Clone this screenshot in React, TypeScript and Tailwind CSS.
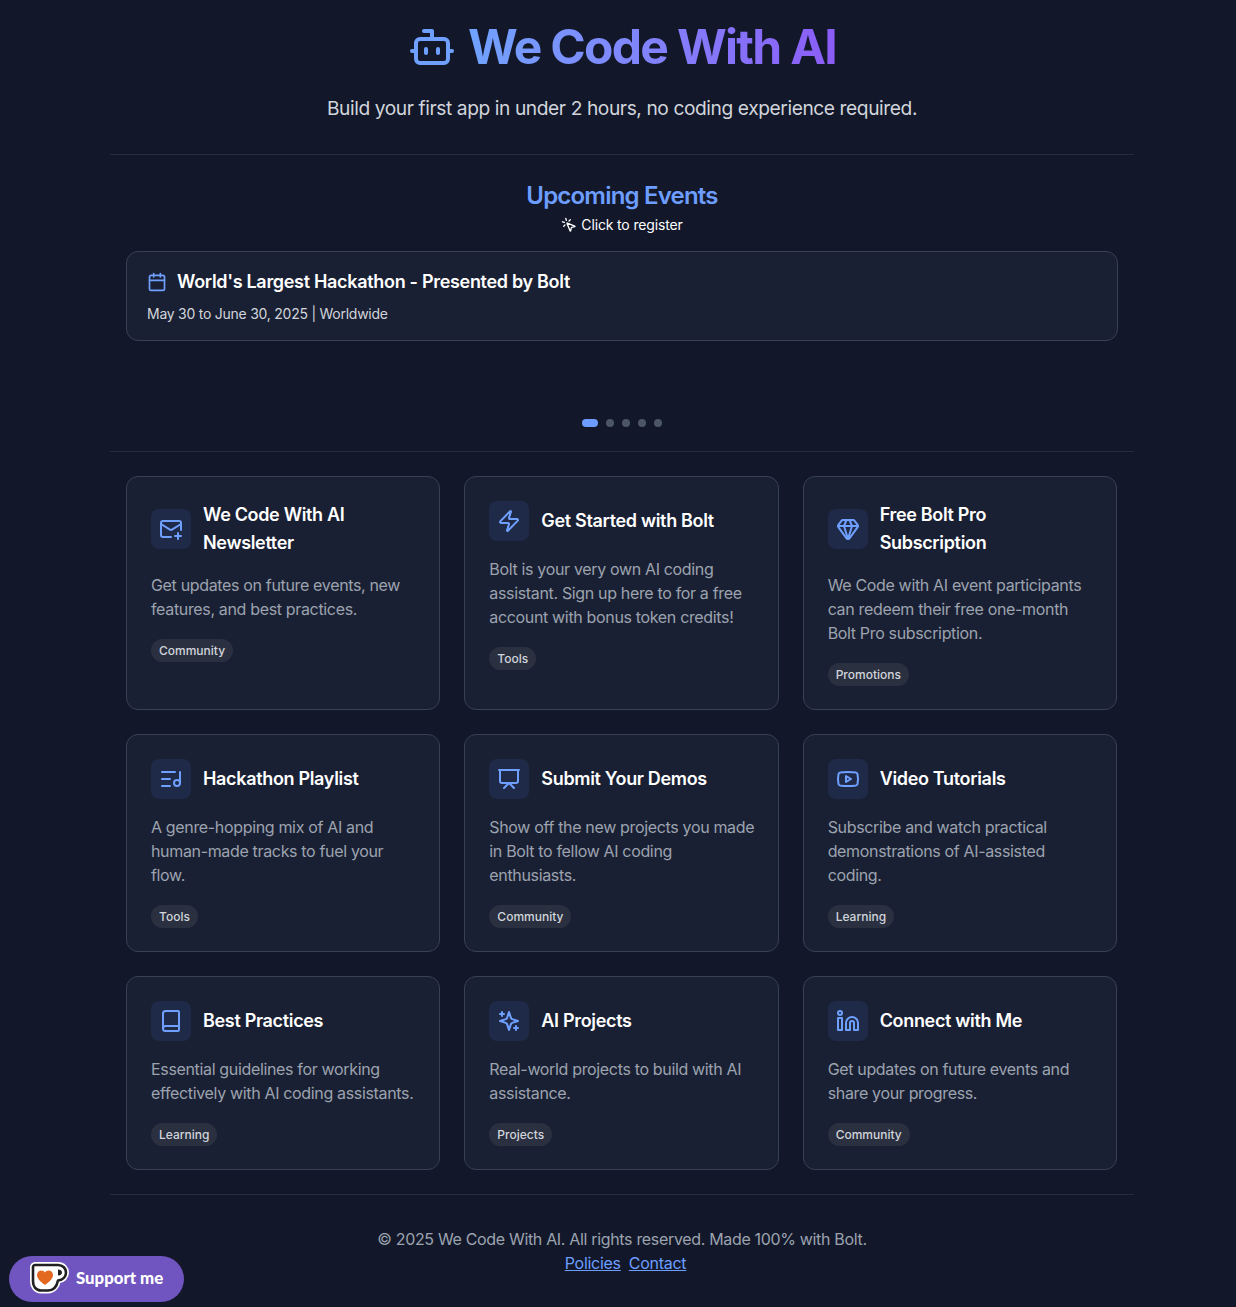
import {
  Book,
  Bot,
  Calendar,
  Gem,
  Linkedin,
  ListMusic,
  MailPlus,
  MousePointerClick,
  Presentation,
  Youtube,
  Zap,
} from 'lucide-react';
import type { ReactNode } from 'react';

function SparklesOld({ className }: { className?: string }) {
  return (
    <svg
      viewBox="0 0 24 24"
      fill="none"
      stroke="currentColor"
      strokeWidth={2}
      strokeLinecap="round"
      strokeLinejoin="round"
      className={className}
    >
      <path d="m12 3-1.912 5.813a2 2 0 0 1-1.275 1.275L3 12l5.813 1.912a2 2 0 0 1 1.275 1.275L12 21l1.912-5.813a2 2 0 0 1 1.275-1.275L21 12l-5.813-1.912a2 2 0 0 1-1.275-1.275L12 3Z" />
      <path d="M5 3v4" />
      <path d="M19 17v4" />
      <path d="M3 5h4" />
      <path d="M17 19h4" />
    </svg>
  );
}

function KofiCup() {
  return (
    <svg viewBox="0 0 40 36" className="h-[36px] w-[40px] shrink-0">
      {/* white sticker edge, then dark outline, then the cup */}
      <path
        d="M6 5h23c5 0 8 3.500 8 7.500s-3 7.500-8 8c-1 5-4 10-10 10h-7c-5 0-8-4-8-9V7c0-1 1-2 2-2Z"
        fill="#fff"
        stroke="#fff"
        strokeWidth={6}
        strokeLinejoin="round"
      />
      <path
        d="M6 5h23c5 0 8 3.500 8 7.500s-3 7.500-8 8c-1 5-4 10-10 10h-7c-5 0-8-4-8-9V7c0-1 1-2 2-2Z"
        fill="#fff"
        stroke="#202020"
        strokeWidth={2.6}
        strokeLinejoin="round"
      />
      <path d="M29 9.500c2.500 0 4 1.300 4 3s-1.500 3-4 3Z" fill="#202020" />
      <path
        d="M16 25c-2-1.500-8-5.500-8-10 0-2.500 2-4.500 4.500-4.500 1.500 0 2.800 .8 3.500 2 .7-1.200 2-2 3.500-2 2.500 0 4.500 2 4.500 4.500 0 4.500-6 8.500-8 10Z"
        fill="#e2691f"
      />
    </svg>
  );
}

type CardData = {
  icon: ReactNode;
  title: ReactNode;
  description: string;
  tag: string;
};

const iconClass = 'size-6 text-[#70a0ff]';

const cards: CardData[] = [
  {
    icon: <MailPlus className={iconClass} />,
    title: 'We Code With AI Newsletter',
    description: 'Get updates on future events, new features, and best practices.',
    tag: 'Community',
  },
  {
    icon: <Zap className={iconClass} />,
    title: 'Get Started with Bolt',
    description:
      'Bolt is your very own AI coding assistant. Sign up here to for a free account with bonus token credits!',
    tag: 'Tools',
  },
  {
    icon: <Gem className={iconClass} />,
    title: 'Free Bolt Pro Subscription',
    description:
      'We Code with AI event participants can redeem their free one-month Bolt Pro subscription.',
    tag: 'Promotions',
  },
  {
    icon: <ListMusic className={iconClass} />,
    title: 'Hackathon Playlist',
    description: 'A genre-hopping mix of AI and human-made tracks to fuel your flow.',
    tag: 'Tools',
  },
  {
    icon: <Presentation className={iconClass} />,
    title: 'Submit Your Demos',
    description: 'Show off the new projects you made in Bolt to fellow AI coding enthusiasts.',
    tag: 'Community',
  },
  {
    icon: <Youtube className={iconClass} />,
    title: 'Video Tutorials',
    description: 'Subscribe and watch practical demonstrations of AI-assisted coding.',
    tag: 'Learning',
  },
  {
    icon: <Book className={iconClass} />,
    title: 'Best Practices',
    description: 'Essential guidelines for working effectively with AI coding assistants.',
    tag: 'Learning',
  },
  {
    icon: <SparklesOld className={iconClass} />,
    title: 'AI Projects',
    description: 'Real-world projects to build with AI assistance.',
    tag: 'Projects',
  },
  {
    icon: <Linkedin className={iconClass} />,
    title: 'Connect with Me',
    description: 'Get updates on future events and share your progress.',
    tag: 'Community',
  },
];

function ResourceCard({ icon, title, description, tag }: CardData) {
  return (
    <div className="rounded-xl border border-[#374151] bg-[#1a2033] p-6">
      <div className="mb-4 flex items-center gap-3">
        <span className="flex size-10 shrink-0 items-center justify-center rounded-lg bg-[#1e2a47]">
          {icon}
        </span>
        <h3 className="text-lg leading-7 font-semibold tracking-[-0.33px] text-white">{title}</h3>
      </div>
      <p className="-mr-1 text-base leading-6 tracking-[-0.34px] text-[#9ca3af]">{description}</p>
      <span className="mt-[18px] -mb-px inline-block rounded-full bg-[#2a3040] px-2 pt-1 pb-[3px] align-top text-xs leading-4 font-medium text-[#d1d5db]">
        {tag}
      </span>
    </div>
  );
}

export default function App() {
  return (
    <div className="min-h-[1307px] bg-[#12182a] pl-[110px] font-['Inter',sans-serif] text-white">
      <div className="w-[1024px]">
        {/* Header */}
        <header className="border-b border-[#262c3c] pt-[23px] pb-8 text-center">
          <h1 className="flex items-center justify-center gap-3 text-5xl leading-12 font-bold tracking-[-1.7px]">
            <Bot className="size-12 text-[#70a0ff]" />
            <span className="bg-gradient-to-r from-[#70a3ff] to-[#8b5cf6] bg-clip-text text-transparent">
              We Code With AI
            </span>
          </h1>
          <p className="mt-[23px] text-[19.2px] leading-7 tracking-[-0.42px] text-[#d1d5db]">
            Build your first app in under 2 hours, no coding experience required.
          </p>
        </header>

        {/* Upcoming events */}
        <section className="border-b border-[#262c3c] px-4 pt-[25px] pb-6">
          <h2 className="text-center text-2xl leading-8 font-semibold tracking-[-0.8px] text-[#6d9eff]">
            Upcoming Events
          </h2>
          <p className="mt-[3px] flex items-center justify-center gap-1 text-sm leading-5 tracking-[-0.15px] text-white">
            <MousePointerClick className="size-4" />
            Click to register
          </p>
          <div className="mt-4 h-[168px]">
            <div className="rounded-xl border border-[#374151] bg-[#1a2033] px-5 py-4">
              <div className="mb-2 flex items-center gap-2.5">
                <Calendar className="size-5 text-[#70a0ff]" />
                <h3 className="text-lg leading-7 font-semibold tracking-[-0.31px] text-white">
                  World's Largest Hackathon - Presented by Bolt
                </h3>
              </div>
              <p className="text-sm leading-5 tracking-[-0.25px] text-[#d1d5db]">
                May 30 to June 30, 2025 | Worldwide
              </p>
            </div>
          </div>
          <div className="flex justify-center gap-2">
            <span className="h-2 w-4 rounded-full bg-[#6d9eff]" />
            <span className="size-2 rounded-full bg-[#4b5563]" />
            <span className="size-2 rounded-full bg-[#4b5563]" />
            <span className="size-2 rounded-full bg-[#4b5563]" />
            <span className="size-2 rounded-full bg-[#4b5563]" />
          </div>
        </section>

        {/* Resource cards */}
        <section className="grid grid-cols-3 gap-6 border-b border-[#262c3c] py-6 pr-[17px] pl-4">
          {cards.map((card) => (
            <ResourceCard key={card.description} {...card} />
          ))}
        </section>

        {/* Footer */}
        <footer className="pt-8 text-center text-base leading-6 tracking-[-0.33px] text-[#9ca3af]">
          <p>© 2025 We Code With AI. All rights reserved. Made 100% with Bolt.</p>
          <p className="flex justify-center gap-2 pl-[7px] tracking-[-0.28px]">
            <a href="#" className="text-[#6d9eff] underline">
              Policies
            </a>
            <a href="#" className="text-[#6d9eff] underline">
              Contact
            </a>
          </p>
        </footer>
      </div>

      {/* Ko-fi floating button */}
      <a
        href="#"
        className="fixed bottom-[5px] left-[9px] flex h-[46px] w-[175px] items-center gap-[7px] rounded-full bg-[#7055c0] pb-[2px] pl-[20px] font-['Lato',sans-serif] text-[16.8px] font-black text-white"
      >
        <KofiCup />
        Support me
      </a>
    </div>
  );
}
